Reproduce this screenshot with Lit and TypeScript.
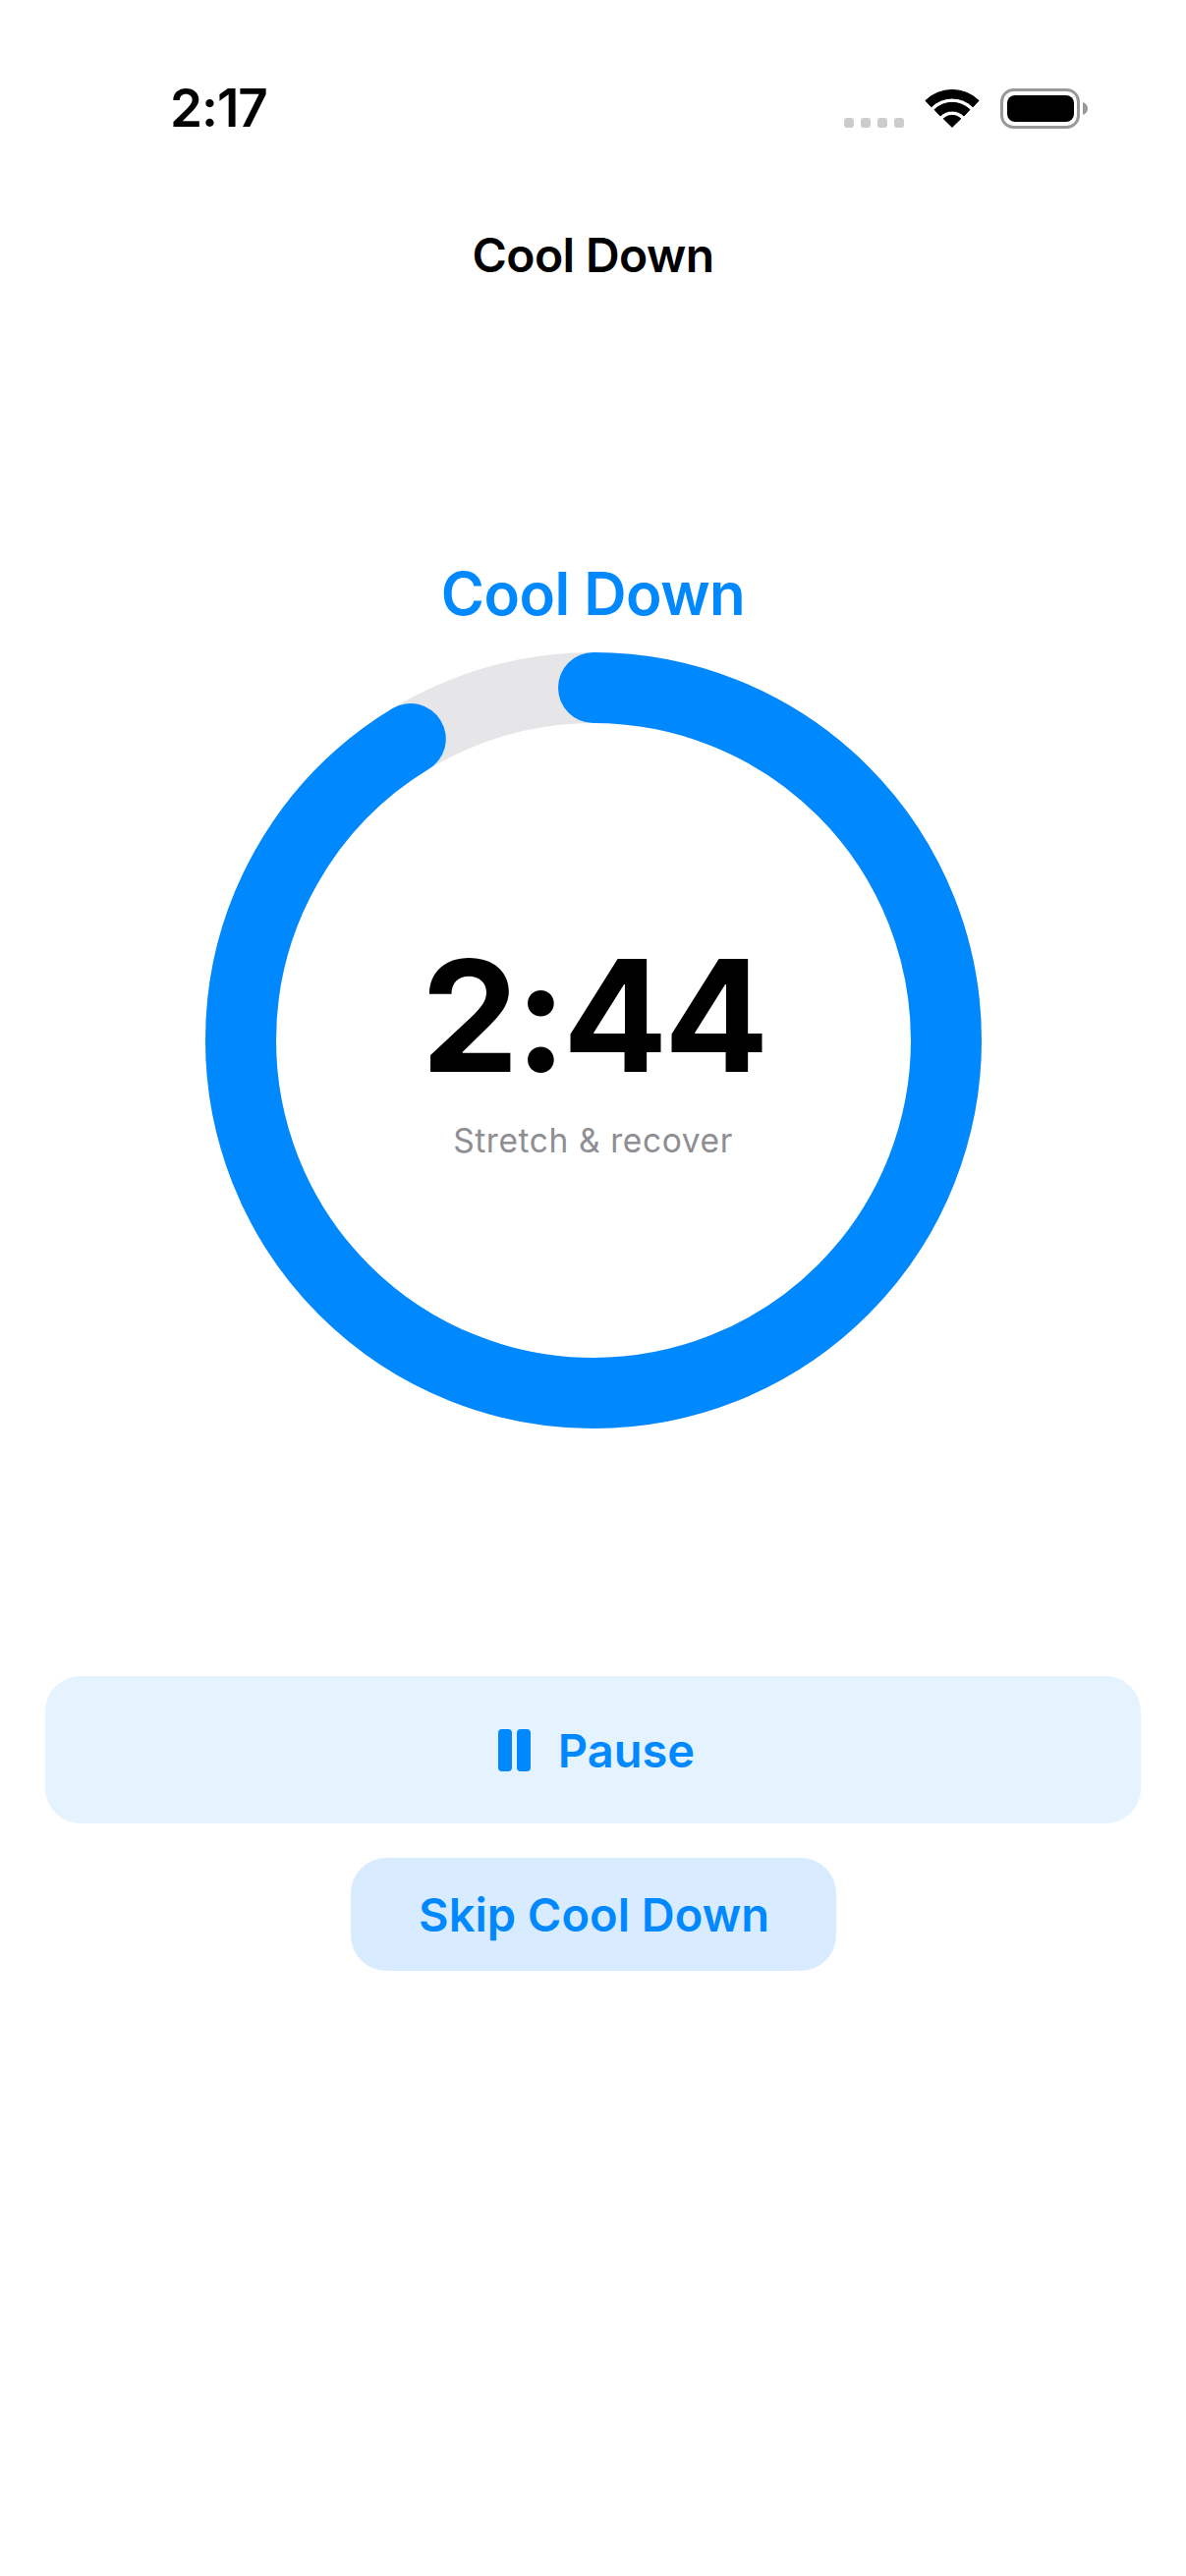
import { LitElement, html, css, svg } from "lit";
import { customElement } from "lit/decorators.js";

const R = 359;
const PROGRESS = 0.9128;

@customElement("app-root")
export class AppRoot extends LitElement {
  static styles = css`
    :host { display: block; width: 1207px; min-height: 2622px; background: #fff; font-family: Inter, "Liberation Sans", sans-serif; color: #000; }
    .status { display: flex; align-items: center; justify-content: space-between; height: 60px; padding: 80px 99px 0 173px; }
    .time { font-size: 53px; font-weight: 600; letter-spacing: -1px; line-height: 60px; }
    .icons { display: flex; align-items: flex-start; }
    .dots { display: flex; gap: 6.5px; margin: 30px 21px 0 0; }
    .dots i { width: 10.5px; height: 10px; border-radius: 3px; background: #ccc; display: block; }
    .wifi { width: 56px; height: 40px; margin-right: 21px; display: block; }
    .battery { width: 90px; height: 41px; display: block; }
    .nav { text-align: center; font-size: 48px; font-weight: 600; line-height: 60px; margin-top: 90px; letter-spacing: -0.6px; }
    .label { text-align: center; color: #0088ff; font-size: 60px; font-weight: 600; line-height: 72px; margin-top: 278px; letter-spacing: -0.5px; }
    .ring { display: grid; width: 790px; height: 790px; margin: 24px auto 0; place-items: center; }
    .ring > * { grid-area: 1 / 1; }
    .ring svg { display: block; width: 790px; height: 790px; }
    .center { display: flex; flex-direction: column; align-items: center; margin-top: 6px; }
    .clock { font-size: 158px; font-weight: 700; line-height: 180px; letter-spacing: -4px; }
    .sub { font-size: 33.5px; color: #8e8e93; line-height: 40px; margin-top: 17px; letter-spacing: 0.6px; }
    .actions { display: flex; flex-direction: column; align-items: center; gap: 35px; margin: 252px 46px 0; }
    button { font: inherit; border: 0; color: #0088ff; font-weight: 600; font-size: 47px; display: flex; align-items: center; justify-content: center; padding: 0; }
    .pause { width: 100%; height: 150px; border-radius: 36px; background: #e5f3ff; gap: 28px; padding-left: 7px; }
    .pause svg { width: 33px; height: 43px; display: block; }
    .skip { width: 494px; height: 115px; border-radius: 36px; background: #d9ecff; padding-left: 2px; }
  `;

  render() {
    const len = 2 * Math.PI * R * PROGRESS;
    const circ = 2 * Math.PI * R;
    return html`
      <div class="status">
        <span class="time">2:17</span>
        <div class="icons">
          <div class="dots"><i></i><i></i><i></i><i></i></div>
          <svg class="wifi" viewBox="0 0 56 40"><g fill="#000" stroke="#000" stroke-width="1" stroke-linejoin="round">
            <path d="M0.9 12.4A39 39 0 0 1 55.1 12.4L49.2 18.8A30 30 0 0 0 6.8 18.8Z"/>
            <path d="M10 21.6A26 26 0 0 1 46 21.6L40 28A17 17 0 0 0 16 28Z"/>
            <path d="M19.2 30.8A13 13 0 0 1 36.8 30.8L28 39.4Z"/>
          </g></svg>
          <svg class="battery" viewBox="0 0 90 41">
            <rect x="1.5" y="1.5" width="78" height="38" rx="12" fill="none" stroke="#999" stroke-width="3"/>
            <rect x="7" y="7" width="68" height="27" rx="8" fill="#000"/>
            <path d="M84 14c3 1 5 3.500 5 6.500s-2 5.500-5 6.500z" fill="#999"/>
          </svg>
        </div>
      </div>
      <div class="nav">Cool Down</div>
      <div class="label">Cool Down</div>
      <div class="ring">
        <svg viewBox="0 0 790 790">
          ${svg`<circle cx="395" cy="395" r="${R}" fill="none" stroke="#e6e6e9" stroke-width="72"/>
          <circle cx="395" cy="395" r="${R}" fill="none" stroke="#0088ff" stroke-width="72" stroke-linecap="round"
            stroke-dasharray="${len} ${circ}" transform="rotate(-90 395 395)"/>`}
        </svg>
        <div class="center">
          <div class="clock">2:44</div>
          <div class="sub">Stretch &amp; recover</div>
        </div>
      </div>
      <div class="actions">
        <button class="pause">
          <svg viewBox="0 0 33 43"><rect width="14" height="43" rx="4" fill="#0088ff"/><rect x="19" width="14" height="43" rx="4" fill="#0088ff"/></svg>
          <span>Pause</span>
        </button>
        <button class="skip">Skip Cool Down</button>
      </div>
    `;
  }
}
